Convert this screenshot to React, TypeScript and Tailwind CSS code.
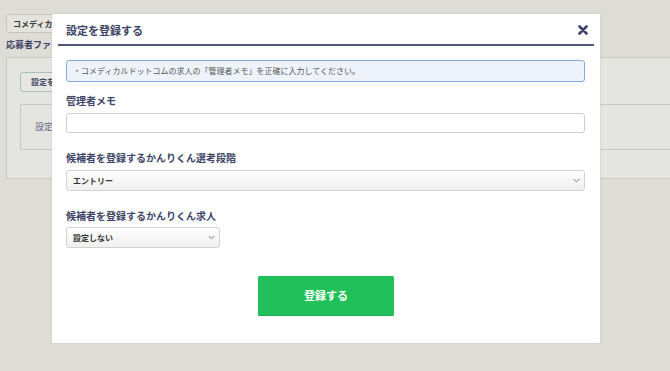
import React from "react";

const font = { fontFamily: '"Noto Sans CJK JP", "Noto Sans", sans-serif' };

function Chevron() {
  return (
    <svg width="7" height="5" viewBox="0 0 7 5" className="shrink-0">
      <path d="M0.8 1 L3.5 3.8 L6.2 1" fill="none" stroke="#777" strokeWidth="1" />
    </svg>
  );
}

export default function App() {
  return (
    <div
      className="relative w-[670px] h-[371px] overflow-hidden bg-[#dedcd6]"
      style={font}
    >
      {/* background page (dimmed) */}
      <div className="pt-[14px] pl-[6px]">
        <div className="flex w-fit h-[19px] items-center px-[6px] border border-[#c6c5be] rounded-[3px] bg-[#e4e3de] text-[8px] font-bold text-[#3a3a3a]">
          コメディカルドットコム連携
        </div>
        <div className="mt-[5px] h-[13px] text-[9px] leading-[13px] font-bold text-[#3d4468]">
          応募者ファイル設定
        </div>
        <div className="mt-[6px] h-[122px] w-[700px] border border-[#c9c8c2] bg-[#e4e4e1] pl-[13px] pt-[14px]">
          <div className="flex w-fit h-[20px] items-center px-[10px] border border-[#a9c2bc] rounded-[3px] bg-[#e6e6e3] text-[8px] font-bold text-[#444a66]">
            設定を追加する
          </div>
          <div className="mt-[12px] h-[46px] border border-[#c9c8c2] flex items-center pl-[14px] text-[9px] text-[#666a80]">
            設定がありません
          </div>
        </div>
      </div>

      {/* modal */}
      <div className="absolute left-[52px] top-[14px] w-[548px] h-[329px] bg-white shadow-[0_0_2px_rgba(0,0,0,0.12)]">
        <div className="mx-[6px] h-[32px] flex items-center justify-between pl-[8px] pr-[6px] border-b-2 border-[#4f5678]">
          <span className="text-[11px] font-bold text-[#3a4064] pt-[2px]">設定を登録する</span>
          <svg width="10" height="10" viewBox="0 0 10 10" className="mt-[2px]">
            <path d="M1.5 1.5 L8.5 8.5 M8.5 1.5 L1.5 8.5" stroke="#3b4168" strokeWidth="2.6" strokeLinecap="round" />
          </svg>
        </div>

        <div className="pl-[14px] pr-[15px]">
          <div className="mt-[14px] h-[22px] flex items-center px-[6px] border border-[#86a8de] rounded-[3px] bg-[#eef3fb] text-[8px] text-[#555]">
            ・コメディカルドットコムの求人の「管理者メモ」を正確に入力してください。
          </div>

          <div className="mt-[12px] h-[14px] text-[10px] leading-[14px] font-bold text-[#3e4468]">
            管理者メモ
          </div>
          <div className="mt-[5px] h-[20px] border border-[#cfcfcf] rounded-[3px] bg-white" />

          <div className="mt-[18px] h-[14px] text-[10px] leading-[14px] font-bold text-[#3e4468]">
            候補者を登録するかんりくん選考段階
          </div>
          <div className="mt-[5px] h-[21px] flex items-center justify-between pl-[6px] pr-[4px] border border-[#d2d2d2] rounded-[3px] bg-gradient-to-b from-white to-[#efefef] text-[8px] font-bold text-[#333]">
            <span>エントリー</span>
            <Chevron />
          </div>

          <div className="mt-[18px] h-[14px] text-[10px] leading-[14px] font-bold text-[#3e4468]">
            候補者を登録するかんりくん求人
          </div>
          <div className="mt-[4px] w-[154px] h-[21px] flex items-center justify-between pl-[6px] pr-[4px] border border-[#d2d2d2] rounded-[3px] bg-gradient-to-b from-white to-[#efefef] text-[8px] font-bold text-[#333]">
            <span>設定しない</span>
            <Chevron />
          </div>

          <div className="mt-[28px] flex justify-center pl-[1px]">
            <div className="w-[136px] h-[40px] flex items-center justify-center rounded-[2px] bg-[#22c05a] border-b border-[#1fa84f] shadow-[0_0_1px_rgba(0,0,0,0.3)] text-[11px] font-bold text-white">
              登録する
            </div>
          </div>
        </div>
      </div>
    </div>
  );
}
